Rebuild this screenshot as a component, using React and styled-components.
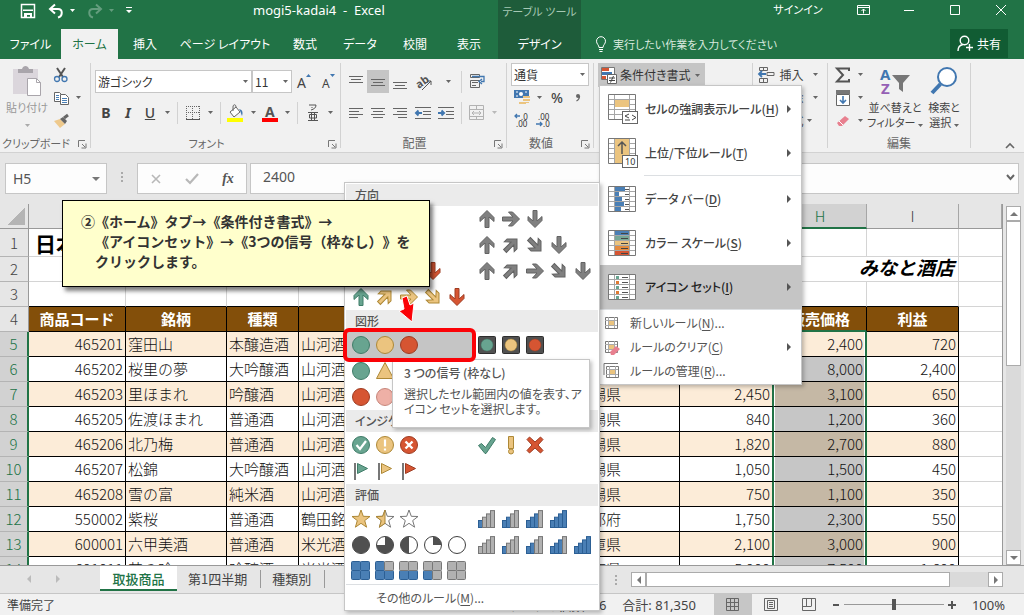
import React from 'react';
import styled, { createGlobalStyle, css } from 'styled-components';

const GlobalStyle = createGlobalStyle`
  * { box-sizing: border-box; }
  body { margin: 0; font-family: "Noto Sans", "Noto Sans CJK JP", sans-serif; font-size: 12px; line-height: 16px; color: #444; font-feature-settings: "palt"; }
  button, input, select { font: inherit; font-feature-settings: inherit; color: inherit; margin: 0; padding: 0; border: 0; background: none; border-radius: 0; }
  button { white-space: nowrap; cursor: default; }
`;

const GREEN = '#217346';
const jp = css`font-family: "Noto Sans CJK JP", sans-serif;`;

/* ---------- frame ---------- */
const Window = styled.div`position: relative; height: 100vh; display: flex; flex-direction: column; overflow: hidden; background: #e6e6e6;`;
const Spacer = styled.span`flex: 1;`;
const Header = styled.header`flex: none; background: ${GREEN}; color: #fff;`;
const TitleBar = styled.div`display: flex; height: 29px;`;
const QuickAccess = styled.div`display: flex; align-items: center; width: 186px; padding: 0 0 8px 20px; gap: 12px;`;
const DocTitle = styled.h1`margin: 0; width: 312px; padding: 2px 0 0 67px; font-size: 13px; line-height: 16px; font-weight: 400; white-space: nowrap;`;
const ContextTitle = styled.div`width: 83px; background: #1e5c3a; color: #a6c8b4; text-align: center; font-size: 11px; line-height: 24px; white-space: nowrap;`;
const WindowControls = styled.div`flex: 1; display: flex; justify-content: flex-end;`;
const SignIn = styled.button`width: 52px; height: 20px; margin-right: 16px; font-size: 11px;`;
const Control = styled.button`width: ${p => p.$w || 46}px; height: 20px; display: flex; align-items: center; justify-content: center;`;
const IconButton = styled.button`display: flex; align-items: center; gap: 6px; opacity: ${p => (p.$dim ? 0.3 : 1)};`;

const TabRow = styled.nav`display: flex; height: 30px;`;
const Tab = styled.button`
  ${jp} width: ${p => p.$w}px; text-align: center; line-height: 28px;
  ${p => p.$active && css`background: #f1f1f1; color: ${GREEN};`}
  ${p => p.$context && css`background: #1e5c3a; margin-left: 2px;`}
`;
const TellMe = styled.button`${jp} display: flex; align-items: center; gap: 6px; margin-left: 14px; color: #d9e9df; flex: 1; font-size: 11px;`;
const Share = styled.button`${jp} display: flex; align-items: center; justify-content: center; gap: 4px; width: 58px; height: 29px; margin-right: 16px; background: #115c33;`;

/* ---------- ribbon ---------- */
const Ribbon = styled.section`${jp} flex: none; height: 94px; display: flex; padding: 4px 0; background: #f1f1f1; border-bottom: 1px solid #d2d2d2;`;
const Group = styled.div`width: ${p => p.$w}px; flex: none; display: flex; flex-direction: column; border-right: 1px solid #d2d2d2;`;
const GroupBody = styled.div`flex: 1; min-height: 0; display: flex; padding: ${p => p.$pad || '0'}; gap: ${p => p.$gap || 0}px;`;
const GroupFoot = styled.div`
  position: relative; flex: none; height: 13px; line-height: 16px; text-align: center; color: #666; white-space: nowrap;
  font-size: ${p => (p.$small ? 11 : 12)}px; padding-right: ${p => (p.$launch ? 18 : 0)}px;
`;
const Launcher = styled.button`position: absolute; right: 3px; top: 5px; width: 9px; height: 9px; display: flex;`;
const Rows = styled.div`display: flex; flex-direction: column; gap: ${p => p.$gap || 0}px;`;
const Row = styled.div`display: flex; align-items: center; height: 23px;`;
const Tool = styled.button`
  width: ${p => p.$w || 22}px; height: 23px; flex: none; display: flex; align-items: center; justify-content: center; gap: 4px;
  font-size: 12px; color: #444; opacity: ${p => (p.$off ? 0.4 : 1)};
  ${p => p.$on && css`background: #c5c5c5;`}
`;
const Letter = styled.span`font: 14px/20px "Noto Sans", sans-serif; font-weight: ${p => p.$weight || 700}; font-style: ${p => p.$style || 'normal'}; text-decoration: ${p => p.$line || 'none'};`;
const Divider = styled.span`width: 1px; height: 22px; margin: 0 ${p => p.$r || 4}px 0 4px; background: #d2d2d2;`;
const BigTool = styled.button`${jp} width: ${p => p.$w}px; height: 72px; display: flex; flex-direction: column; align-items: center; font-size: 11px; line-height: 15px; color: ${p => (p.$off ? '#999' : '#444')};`;
const BigIcon = styled.span`height: 37px; flex: none; display: flex; align-items: flex-start; justify-content: center;`;
const SelectBox = styled.label`display: flex; align-items: center; width: ${p => p.$w}px; height: 23px; background: #fff; border: 1px solid #c6c6c6; padding-right: 3px;`;
const Select = styled.select`appearance: none; flex: 1; min-width: 0; height: 20px; padding-left: 2px; outline: none; font-size: 12px; color: #333;`;
const CondButton = styled.button`width: 107px; height: 24px; margin: 0 0 0 4px; display: flex; align-items: center; gap: 2px; padding-left: 3px; background: #c5c5c5; font-size: 12px; color: #333;`;
const Collapse = styled.button`margin: auto 9px 0 auto; height: 12px;`;

/* ---------- formula bar ---------- */
const FormulaBar = styled.div`flex: none; display: flex; padding: 10px 5px 10px; height: 51px; font-size: 14px;`;
const NameBox = styled.div`display: flex; align-items: center; width: 102px; height: 31px; padding: 0 6px 0 7px; background: #fdfdfd; border: 1px solid #c6c6c6;`;
const NameInput = styled.input`flex: 1; min-width: 0; outline: none; color: #555;`;
const Dots = styled.span`width: 30px; display: flex; align-items: center; justify-content: center; height: 28px;`;
const FxBox = styled.div`display: flex; width: 110px; height: 31px; background: #fdfdfd; border: 1px solid #c6c6c6;`;
const FxButton = styled.button`flex: 1; display: flex; align-items: center; justify-content: center; font-family: "Liberation Serif", serif; font-style: italic; font-weight: 700; color: #555;`;
const FormulaInputBox = styled.div`flex: 1; display: flex; align-items: center; margin-left: 3px; height: 31px; padding: 0 3px 3px 12px; background: #fdfdfd; border: 1px solid #c6c6c6;`;

/* ---------- sheet ---------- */
const SheetArea = styled.main`flex: 1; min-height: 0; display: flex;`;
const SheetView = styled.div`flex: 1; min-width: 0; overflow: hidden; background: #fff; border-right: 1px solid #999;`;
const Sheet = styled.table`
  ${jp} width: 100%; table-layout: fixed; border-collapse: separate; border-spacing: 0; font-size: 15px; font-feature-settings: normal; line-height: 22px; color: #222;
  th, td { padding: 0; overflow: hidden; white-space: nowrap; }
`;
const Col = styled.col`width: ${p => (p.$w ? p.$w + 'px' : 'auto')};`;
const Tr = styled.tr`height: ${p => p.$h || 25}px;`;
const ColHead = styled.th`
  font-weight: 300; color: ${p => (p.$sel ? GREEN : '#444')}; background: ${p => (p.$sel ? '#d2d2d2' : '#e6e6e6')};
  border-right: 1px solid #a6a6a6; border-bottom: ${p => (p.$sel ? `2px solid ${GREEN}` : '1px solid #999')};
`;
const Corner = styled.th`background: linear-gradient(135deg, transparent 50%, #b4b4b4 50%) 8px 4px / 17px 17px no-repeat #e6e6e6; border-right: 1px solid #999; border-bottom: 1px solid #999;`;
const RowHead = styled.th`
  font-weight: 300; text-align: center; color: ${p => (p.$sel ? GREEN : '#444')}; background: ${p => (p.$sel ? '#d2d2d2' : '#e6e6e6')};
  border-bottom: 1px solid #b4b4b4; border-right: ${p => (p.$sel ? `2px solid ${GREEN}` : '1px solid #999')};
`;
const Blank = styled.td`border-bottom: 1px solid ${p => (p.$dark ? '#000' : '#d4d4d4')}; border-right: ${p => (p.$last ? 0 : 1)}px solid #d4d4d4;`;
const SheetTitle = styled(Blank)`font-size: 21px; font-weight: 700; color: #000; && { padding-left: 6px; }`;
const ShopName = styled(Blank)`
  && { padding-right: 4px; font: italic 700 19px/22px "Liberation Serif", "Noto Sans CJK JP", serif; }
  text-align: right; color: #000;
`;
const Heading = styled.th`
  color: #fff; background: #834f0a; font-weight: 700; border-right: 1px solid #000; border-bottom: 1px solid #000;
  ${p => p.$sel && css`border-bottom: 2px solid ${GREEN};`}
`;
const Cell = styled.td`
  && { padding: 0 2px; } font-weight: 300; color: #111; text-align: ${p => (p.$num ? 'right' : 'left')};
  background: ${p => (p.$alt ? '#fcecd8' : '#fff')};
  border-right: 1px solid #000; border-bottom: 1px solid #000;
  ${p => p.$edge && css`border-right: 2px solid ${GREEN};`}
  ${p => p.$sel && css`
    background: ${p.$active ? '#fcecd8' : p.$alt ? '#c5b8a5' : '#c6c6c6'};
    border-right: 2px solid ${GREEN};
    box-shadow: inset 1px 0 #fff, inset -1px 0 #fff;
  `}
`;
const VScroll = styled.div`flex: none; width: 21px; display: flex; flex-direction: column; padding: 2px 2px 0 3px;`;
const ScrollButton = styled.button`width: 15px; height: 15px; flex: none; display: flex; align-items: center; justify-content: center; background: #fff; border: 1px solid #ababab;`;
const Track = styled.div`flex: 1; display: flex; flex-direction: ${p => (p.$v ? 'column' : 'row')}; width: ${p => (p.$v ? '15px' : 'auto')}; background: #dadada;`;
const Thumb = styled.div`flex: none; ${p => (p.$v ? 'height: 44%' : 'width: 89%')}; background: #fff; border: 1px solid #ababab;`;

const SheetTabs = styled.div`${jp} flex: none; display: flex; height: 28px; border-top: 1px solid #999; font-size: 13px; font-feature-settings: normal;`;
const TabArrows = styled.div`width: 100px; display: flex; align-items: center; gap: 21px; padding: 0 0 2px 25px;`;
const SheetTab = styled.button`
  height: 18px; margin-top: 4px; padding: 0 13px 0 11px; border-right: 1px solid #999; line-height: 18px;
  ${p => p.$active && css`width: 77px; height: 25px; margin-top: 0; padding: 0; line-height: 25px; border: 0; border-bottom: 2px solid ${GREEN}; background: #fff; color: ${GREEN}; font-weight: 500;`}
`;
const HScroll = styled.div`display: flex; align-items: center; width: 372px; height: 15px; margin: 6px 21px 0 0; > * { height: 15px; }`;
const StatusBar = styled.footer`flex: none; display: flex; align-items: center; height: 22px; background: #f1f1f1; border-top: 1px solid #c6c6c6;`;
const Status = styled.span`font-size: ${p => (p.$jp ? 12 : 13)}px; ${p => p.$jp && jp} margin-left: ${p => p.$ml || 0}px; margin-right: ${p => p.$mr || 0}px; white-space: nowrap;`;
const ViewButton = styled.button`width: 38px; height: 21px; display: flex; align-items: center; justify-content: center; ${p => p.$on && css`background: #c6c6c6;`}`;
const ZoomButton = styled.button`width: 10px; height: 16px; margin: 0 3px; display: flex; align-items: center; justify-content: center;`;
const ZoomRange = styled.input`
  appearance: none; width: 100px; height: 12px;
  background: linear-gradient(#999, #999) center / 100% 1px no-repeat;
  &::-webkit-slider-thumb { appearance: none; width: 4px; height: 11px; background: #555; }
`;

/* ---------- popups ---------- */
const Popup = styled.div`${jp} position: absolute; background: #fff; border: 1px solid #c6c6c6; box-shadow: 2px 2px 4px rgba(0, 0, 0, 0.25);`;
const Menu = styled(Popup)`left: 599px; top: 85px; width: 203px; padding: 1px 0;`;
const MenuItem = styled.button`
  display: flex; align-items: center; width: 100%; height: ${p => (p.$big ? 44 : 24)}px; padding: 0 8px 0 ${p => (p.$big ? 8 : 4)}px; text-align: left;
  font-size: 12px; font-weight: ${p => (p.$big ? 500 : 400)}; color: ${p => (p.$on ? '#222' : p.$big ? '#444' : '#555')}; background: ${p => (p.$on ? '#c5c5c5' : 'none')};
`;
const MenuText = styled.span`flex: 1; margin-left: ${p => (p.$big ? 7 : 9)}px;`;
const Key = styled.u`text-underline-offset: 2px;`;
const MenuLine = styled.div`height: 1px; margin-bottom: 1px; margin-left: ${p => p.$ml || 0}px; background: #dcdfe2;`;
const Gallery = styled(Popup)`left: 344px; top: 182px; width: 256px; padding: 1px 1px 0;`;
const Band = styled.h2`margin: 0; height: 22px; padding-left: 9px; font-size: 12px; font-weight: 500; line-height: 22px; color: #555; background: #ebebeb;`;
const GalleryGrid = styled.div`display: grid; grid-template-columns: 126px 126px; grid-auto-rows: 26px;`;
const GalleryItem = styled.button`display: flex; align-items: center; padding-left: 3px; ${p => p.$on && css`background: #c5c5c5;`} svg { width: 24px; height: 24px; flex: none; }`;
const GalleryMore = styled.button`display: block; width: 100%; height: 26px; padding-left: 30px; text-align: left; color: #555; border-top: 1px solid #dcdfe2;`;
const Tooltip = styled(Popup)`left: 392px; top: 359px; width: 198px; height: 69px; padding: 5px 11px; color: #555; line-height: 15px; white-space: nowrap;`;
const TooltipTitle = styled.strong`display: block; margin-bottom: 5px; line-height: 16px; font-weight: 500;`;
const Callout = styled.p`
  ${jp} position: absolute; left: 62px; top: 200px; width: 368px; height: 87px; margin: 0; padding: 10px 0 0 18px;
  background: #ffffcc; border: 1px solid #000; box-shadow: 3px 4px 4px rgba(0, 0, 0, 0.5);
  font-size: 14px; line-height: 20px; font-weight: 700; color: #333; font-feature-settings: normal; text-spacing-trim: space-all; white-space: nowrap;
`;
const Indent = styled.span`display: block; padding-left: 14px;`;
const Highlight = styled.div`position: absolute; left: 343px; top: 328px; width: 133px; height: 34px; border: 4px solid #fb0207; border-radius: 6px;`;
const Pointer = styled.svg`position: absolute; left: 392px; top: 290px;`;

/* ---------- drawings ---------- */
const Svg = ({ w = 16, h = w, children, ...rest }) => <svg width={w} height={h} viewBox={`0 0 ${w} ${h}`} fill="none" overflow="visible" aria-hidden="true" {...rest}>{children}</svg>;
const Caret = ({ c = '#666' }) => <Svg w={5} h={3}><path d="M0 0h5L2.5 3z" fill={c} /></Svg>;
const Drop = ({ w = 12, off }) => <Tool $w={w} $off={off} aria-label="その他"><Caret /></Tool>;
const Tri = ({ dir, c = '#777' }) => {
  const d = { up: 'M0 6l4-4 4 4z', down: 'M0 2h8L4 6z', left: 'M6 0v8L2 4z', right: 'M2 0v8l4-4z' }[dir];
  return <Svg w={8}><path d={d} fill={c} /></Svg>;
};
const LaunchIcon = () => <Launcher aria-label="詳細"><Svg w={9}><path d="M.5 7V.5H7M4 4l3 3M8 3.5V8H3.5" stroke="#777" /></Svg></Launcher>;
const Foot = ({ children, launch = true, small }) => <GroupFoot $launch={launch} $small={small}>{children}{launch && <LaunchIcon />}</GroupFoot>;

const lineSets = {
  top: [[1, 4, 14], [3, 7, 10], [1, 10, 14]],
  left: [[1, 3, 14], [1, 6, 10], [1, 9, 14], [1, 12, 9]],
  center: [[1, 3, 14], [3, 6, 10], [1, 9, 14], [3, 12, 10]],
  right: [[1, 3, 14], [5, 6, 10], [1, 9, 14], [6, 12, 9]],
};
const Lines = ({ set, dy = 0 }) => <Svg>{lineSets[set].map(([x, y, w]) => <rect key={y} x={x} y={y + dy} width={w} height="1" fill="#666" />)}</Svg>;
const IndentIcon = ({ dir }) => (
  <Svg w={18} h={16}>
    <path d="M1 2.5h16M9 6.5h8M9 9.5h8M1 13.5h16" stroke="#666" />
    <path d={dir === 'out' ? 'M8 8H2M4.500 5.500L2 8l2.500 2.500' : 'M1 8h6M4.500 5.500L7 8l-2.500 2.500'} stroke="#4177b0" strokeWidth="2" />
  </Svg>
);

const pal = { g: ['#68a490', '#3f7c68'], y: ['#ebc47f', '#ad8836'], r: ['#d65532', '#9e3c22'], k: ['#808080', '#636363'], p: ['#eeb0a6', '#c7867b'] };
const angle = { u: 0, ur: 45, r: 90, dr: 135, d: 180 };
const I = ({ children }) => <Svg w={24}>{children}</Svg>;
const Arrow = ({ d, c }) => <I><path transform={`rotate(${angle[d]} 12 12)`} d="M12 3.500l7 7v4l-5-4.500v10.500h-4V10l-5 4.500v-4z" fill={pal[c][0]} stroke={pal[c][1]} /></I>;
const Dot = ({ c, children }) => <I><circle cx="12" cy="12" r="8.500" fill={pal[c][0]} stroke={pal[c][1]} />{children}</I>;
const Light = ({ c }) => <I><rect x="3.500" y="3.500" width="17" height="17" rx="1" fill="#505050" stroke="#2e2e2e" /><circle cx="12" cy="12" r="6" fill={pal[c][0]} stroke={pal[c][1]} strokeWidth=".5" /></I>;
const TriUp = ({ c }) => <I><path d="M12 3.500L20.500 19.500h-17z" fill={pal[c][0]} stroke={pal[c][1]} /></I>;
const TriDown = ({ c }) => <I><path d="M3.500 7.500h17L12 17z" fill={pal[c][0]} stroke={pal[c][1]} /></I>;
const Dash = ({ c }) => <I><path d="M3.500 9.500h17v5h-17z" fill={pal[c][0]} stroke={pal[c][1]} /></I>;
const Diamond = ({ c }) => <I><path d="M12 3l9 9-9 9-9-9z" fill={pal[c][0]} stroke={pal[c][1]} /></I>;
const Flag = ({ c }) => <I><path d="M6 4v17" stroke="#777" strokeWidth="2" /><path d="M8.500 4.500l10 5-10 5z" fill={pal[c][0]} stroke={pal[c][1]} /></I>;
const starPath = 'M12 3l2.300 6.300 6.700.2-5.300 4.100 1.900 6.600L12 16.300l-5.600 3.900 1.900-6.600L3 9.500l6.700-.2z';
const halfStar = 'M12 3v13.300l-5.600 3.900 1.900-6.600L3 9.500l6.700-.2z';
const Star = ({ f }) => (
  <I>
    <path d={starPath} fill={f === 1 ? '#ebc47f' : '#fff'} stroke={f === 1 ? '#ad8836' : '#777'} />
    {f === 0.5 && <path d={halfStar} fill="#ebc47f" stroke="#ad8836" />}
  </I>
);
const pies = { 4: 'M12 3.500a8.500 8.500 0 1 1-.01 0z', 3: 'M12 12V3.500a8.500 8.500 0 1 1-8.500 8.500z', 2: 'M12 3.500a8.500 8.500 0 0 0 0 17z', 1: 'M12 12V3.500a8.500 8.500 0 0 1 8.500 8.500z' };
const Pie = ({ n }) => <I><circle cx="12" cy="12" r="8.500" fill="#fff" stroke="#404040" />{n > 0 && <path d={pies[n]} fill="#505050" />}</I>;
const Bars = ({ n }) => <I>{[0, 1, 2, 3].map(i => <rect key={i} x={3.5 + i * 4} y={13.5 - i * 3.3} width="4" height={7 + i * 3.3} fill={i < n ? '#4a7fb5' : '#b1b1b1'} stroke={i < n ? '#2c5f94' : '#777'} />)}</I>;
const boxes = [[3, 12], [12, 12], [3, 3], [12, 3]];
const fillOrder = [[], [0], [0, 1], [0, 1, 2], [0, 1, 2, 3]];
const Boxes = ({ n }) => <I>{boxes.map(([x, y], i) => { const on = fillOrder[n].includes(i); return <rect key={i} x={x - 0.5} y={y - 0.5} width="9" height="9" rx="1" fill={on ? '#4a7fb5' : '#b1b1b1'} stroke={on ? '#2c5f94' : '#777'} />; })}</I>;
const Check = ({ c, thin }) => thin ? <path d="M7.500 12l3.500 4 6-8" stroke="#fff" strokeWidth="2.200" /> : <I><path d="M3.500 12.500l3-2 4 4 7-10 3 2-9.500 14h-1z" fill={pal[c][0]} stroke={pal[c][1]} /></I>;
const Bang = () => <I><path d="M9.500 3.500h5v12h-5z" fill="#ebc47f" stroke="#ad8836" /><circle cx="12" cy="18.500" r="2.500" fill="#ebc47f" stroke="#ad8836" /></I>;
const Cross = () => <I><path d="M4 6.500L6.500 4l5.500 5 5.500-5L20 6.500 15 12l5 5.500-2.500 2.500-5.500-5-5.500 5L4 17.500 9 12z" fill="#d65532" stroke="#9e3c22" /></I>;

const galleryGroups = [
  ['方向', [
    [<Arrow d="u" c="g" />, <Arrow d="r" c="y" />, <Arrow d="d" c="r" />], ['u', 'r', 'd'].map(d => <Arrow d={d} c="k" />),
    [<TriUp c="g" />, <Dash c="y" />, <TriDown c="r" />], ['u', 'ur', 'dr', 'd'].map(d => <Arrow d={d} c="k" />),
    [<Arrow d="u" c="g" />, <Arrow d="ur" c="y" />, <Arrow d="dr" c="y" />, <Arrow d="d" c="r" />], ['u', 'ur', 'r', 'dr', 'd'].map(d => <Arrow d={d} c="k" />),
    [<Arrow d="u" c="g" />, <Arrow d="ur" c="y" />, <Arrow d="r" c="y" />, <Arrow d="dr" c="y" />, <Arrow d="d" c="r" />],
  ]],
  ['図形', [
    ['g', 'y', 'r'].map(c => <Dot c={c} />), ['g', 'y', 'r'].map(c => <Light c={c} />),
    [<Dot c="g" />, <TriUp c="y" />, <Diamond c="r" />], [],
    [<Dot c="r" />, <Dot c="p" />],
  ]],
  ['インジケーター', [
    [<Dot c="g"><Check thin /></Dot>, <Dot c="y"><path d="M12 6.500v7M12 15.500v2" stroke="#fff" strokeWidth="2.200" /></Dot>, <Dot c="r"><path d="M8.500 8.500l7 7M15.500 8.500l-7 7" stroke="#fff" strokeWidth="2.400" /></Dot>],
    [<Check c="g" />, <Bang />, <Cross />],
    ['g', 'y', 'r'].map(c => <Flag c={c} />),
  ]],
  ['評価', [
    [1, 0.5, 0].map(f => <Star f={f} />), [1, 2, 3, 4].map(n => <Bars n={n} />),
    [4, 3, 2, 1, 0].map(n => <Pie n={n} />), [0, 1, 2, 3, 4].map(n => <Bars n={n} />),
    [<Boxes n={4} />, <Boxes n={3} />, <Boxes n={2} />, <Boxes n={1} />, <Boxes n={0} />],
  ]],
];

const MenuGrid = ({ h = 26, children }) => (
  <Svg w={30} h={h}>
    <path d="M.5.5h27v25H.5z" fill="#fff" stroke="#777" />
    <path d="M6.500 1v24M21.500 1v24M1 5.500h26M1 10.500h26M1 15.500h26M1 20.500h26" stroke="#a6a6a6" />
    {children}
  </Svg>
);
const Badge = () => <rect x="14.500" y="17.500" width="15" height="12" fill="#fff" stroke="#666" />;
const bigIcons = {
  cells: <MenuGrid h={30}><path d="M7 6h14v7H7z" fill="#ebc47f" /><Badge /><path d="M21 20l-4 2 4 2M17 26h5M24 21l4 2.500-4 2.500" stroke="#444" /></MenuGrid>,
  top: <MenuGrid h={30}><path d="M7 1h14v24H7z" fill="#ebc47f" /><path d="M14 16V4M10 8l4-4 4 4" stroke="#555" strokeWidth="1.500" /><Badge /><text x="17" y="27" fontSize="9" fontFamily="Noto Sans" fontWeight="400" fill="#333">10</text></MenuGrid>,
  bars: <MenuGrid>{[9, 3, 6, 8, 5].map((w, i) => <path key={i} d={`M7 ${1 + i * 5}h${w + 1}v4H7z`} fill="#4a7fb5" />)}<path d="M17 3.500h4M17 8.500h4M17 13.500h4M17 18.500h4M17 23.500h4" stroke="#555" /></MenuGrid>,
  scale: <MenuGrid>{['#4a7fb5', '#76a797', '#ebc47f', '#e58b3e', '#d65532'].map((c, i) => <path key={c} d={`M7 ${1 + i * 5}h14v4H7z`} fill={c} />)}<path d="M13 3.500h7M13 8.500h7M13 13.500h7M13 18.500h7M13 23.500h7" stroke="#444" /></MenuGrid>,
  icons: <MenuGrid>{['#68a490', '#e07b33', '#68a490', '#e07b33', '#68a490'].map((c, i) => <rect key={i} x="8" y={2 + i * 5} width="3" height="3" fill={c} />)}<path d="M14 3.500h6M14 8.500h6M14 13.500h6M14 18.500h6M14 23.500h6" stroke="#555" /></MenuGrid>,
};
const SmallGrid = ({ kind }) => (
  <Svg w={17} h={16}>
    {kind === 'manage' && <path d="M0 12V.5H14" stroke="#777" />}
    <g transform={kind === 'manage' ? 'translate(0 1)' : 'translate(-1 0)'}>
      <path d="M2.500 2.500h12v11h-12z" fill="#fff" stroke="#777" />
      <path d="M5.500 2v11M11.500 2v11M2 5.500h12M2 10.500h12" stroke="#aaa" />
      <path d="M6 6h5v4H6z" fill="#ebc47f" />
    </g>
    {kind === 'clear' && <path d="M6 13l6-6 4 3-6 6H7z" fill="#e8808f" />}
  </Svg>
);

const SaveIcon = () => <Svg w={16}><path d="M1.500 1.500h13v13h-13z" stroke="#fff" strokeWidth="1.500" /><path d="M3 6.500h10v1.500H3zM4 10h8v5h-2v-3H7v3H4z" fill="#fff" /></Svg>;
const UndoIcon = ({ flip }) => <Svg w={16}><g transform={flip ? 'matrix(-1 0 0 1 16 0)' : ''}><path d="M2 6h8c5 0 5 7 0 8.500M7 1.500L2 6l5 4.500" stroke="#fff" strokeWidth="2" /></g></Svg>;

/* ---------- data ---------- */
const tabs = [['ファイル', 61], ['ホーム', 57, true], ['挿入', 54], ['ページ レイアウト', 106], ['数式', 54], ['データ', 56], ['校閲', 54], ['表示', 54]];
const products = [
  ['465201', '窪田山', '本醸造酒', '山河酒造', '新潟県', '1,680', '2,400', '720'],
  ['465202', '桜里の夢', '大吟醸酒', '山河酒造', '新潟県', '5,600', '8,000', '2,400'],
  ['465203', '里ほまれ', '吟醸酒', '山河酒造', '新潟県', '2,450', '3,100', '650'],
  ['465205', '佐渡ほまれ', '普通酒', '山河酒造', '新潟県', '840', '1,200', '360'],
  ['465206', '北乃梅', '普通酒', '山河酒造', '新潟県', '1,820', '2,700', '880'],
  ['465207', '松錦', '大吟醸酒', '山河酒造', '新潟県', '1,050', '1,500', '450'],
  ['465208', '雪の富', '純米酒', '山河酒造', '新潟県', '750', '1,100', '350'],
  ['550002', '紫桜', '普通酒', '鶴田銘醸', '京都府', '1,750', '2,300', '550'],
  ['600001', '六甲美酒', '普通酒', '米光酒造', '兵庫県', '2,100', '3,000', '900'],
  ['601011', '英の吟', '吟醸酒', '米光酒造', '兵庫県', '5,900', '7,500', '1,600'],
];
const letters = ['A', 'B', 'C', 'D', 'E', 'F', 'G', 'H', 'I'];
const headings = ['商品コード', '銘柄', '種類', '製造元', '', '産地', '仕入価格', '販売価格', '利益'];
const widths = [29, 97, 101, 72, 150, 125, 106, 94, 93, 92];
const menuBig = [
  ['cells', 'セルの強調表示ルール', 'H'], ['top', '上位/下位ルール', 'T'], null,
  ['bars', 'データ バー', 'D'], ['scale', 'カラー スケール', 'S'], ['icons', 'アイコン セット', 'I'],
];
const menuSmall = [['new', '新しいルール', 'N', '...'], ['clear', 'ルールのクリア', 'C', ''], ['manage', 'ルールの管理', 'R', '...']];

/* ---------- parts ---------- */
const AppHeader = () => (
  <Header>
    <TitleBar>
      <QuickAccess>
        <IconButton aria-label="保存"><SaveIcon /></IconButton>
        <IconButton aria-label="元に戻す"><UndoIcon /><Caret c="#fff" /></IconButton>
        <IconButton aria-label="やり直し" $dim><UndoIcon flip /><Caret c="#fff" /></IconButton>
        <IconButton aria-label="カスタマイズ"><Svg w={6} h={7}><path d="M0 0h6v1H0zM0 3h6L3 6z" fill="#fff" /></Svg></IconButton>
      </QuickAccess>
      <DocTitle>mogi5-kadai4&nbsp; -&nbsp; Excel</DocTitle>
      <ContextTitle>テーブル ツール</ContextTitle>
      <WindowControls>
        <SignIn>サインイン</SignIn>
        <Control aria-label="リボンの表示オプション"><Svg w={13} h={10}><path d="M.5.5h12v9H.5zM1 2.500h11M6.500 8.500V4M4.500 6l2-2 2 2" stroke="#fff" /></Svg></Control>
        <Control aria-label="最小化"><Svg w={10}><path d="M0 5.500h10" stroke="#fff" /></Svg></Control>
        <Control aria-label="最大化"><Svg w={10}><path d="M.5.5h9v9h-9z" stroke="#fff" /></Svg></Control>
        <Control aria-label="閉じる"><Svg w={10}><path d="M0 0l10 10M10 0L0 10" stroke="#fff" /></Svg></Control>
      </WindowControls>
    </TitleBar>
    <TabRow>
      {tabs.map(([t, w, a]) => <Tab key={t} $w={w} $active={a}>{t}</Tab>)}
      <Tab $w={83} $context>デザイン</Tab>
      <TellMe>
        <Svg w={12} h={16}><path d="M4 11.500C4 9 1.500 8 1.500 5.200a4.500 4.500 0 0 1 9 0C10.500 8 8 9 8 11.500zM4 13.500h4M4.500 15.500h3" stroke="#fff" /></Svg>
        実行したい作業を入力してください
      </TellMe>
      <Share>
        <Svg w={16} h={17}><circle cx="7.500" cy="5.500" r="4.300" stroke="#fff" strokeWidth="1.400" /><path d="M1 16c0-4 2-6 5-6.500M12.500 9v7M9 12.500h7" stroke="#fff" strokeWidth="1.400" /></Svg>
        共有
      </Share>
    </TabRow>
  </Header>
);

const AppRibbon = () => (
  <Ribbon>
    <Group $w={91}>
      <GroupBody $pad="0 0 0 4px">
        <BigTool $w={46} $off>
          <BigIcon><Svg w={30} h={34}><path d="M1 6h25v25H1z" fill="#dbd6dc" /><path d="M6 10V6h4c1-4 6-4 7 0h4v4z" fill="#a9a5ab" /><path d="M15.500 15.500h9l4 4v13h-13z" fill="#fff" stroke="#a9a5ab" /><path d="M24.500 15.500v4h4" stroke="#a9a5ab" /></Svg></BigIcon>
          <span>貼り付け</span>
          <span><Caret c="#aaa" /></span>
        </BigTool>
        <Rows>
          <Row><Tool aria-label="切り取り"><Svg><path d="M4 1l6 9M12 1L6 10" stroke="#555" strokeWidth="2" /><circle cx="4" cy="12" r="2.500" stroke="#4177b0" strokeWidth="1.300" /><circle cx="11.500" cy="12" r="2.500" stroke="#4177b0" strokeWidth="1.300" /></Svg></Tool></Row>
          <Row><Tool aria-label="コピー"><Svg><path d="M1.500 2.500h5l2 2v7h-7z" fill="#fff" stroke="#666" /><path d="M7.500 4.500h5l3 3v7h-8z" fill="#fff" stroke="#666" /><path d="M3 5.500h3M3 7.500h3M3 9.500h3M9 8.500h5M9 10.500h5M9 12.500h5" stroke="#4a7fb5" /></Svg></Tool><Drop /></Row>
          <Row><Tool aria-label="書式のコピー"><Svg><path d="M1 8l6-2 5 5-5 4z" fill="#eec98c" /><path d="M7 6l3-2 4 4-2 3z" fill="#666" /><path d="M11 5l4-3" stroke="#666" strokeWidth="3" /></Svg></Tool></Row>
        </Rows>
      </GroupBody>
      <Foot small>クリップボード</Foot>
    </Group>

    <Group $w={250}>
      <GroupBody $pad="7px 0 0 4px">
        <Rows $gap={8}>
          <Row>
            <SelectBox $w={157}><Select aria-label="フォント" defaultValue="游ゴシック"><option>游ゴシック</option></Select><Caret /></SelectBox>
            <SelectBox $w={40}><Select aria-label="フォント サイズ" defaultValue="11"><option>11</option></Select><Caret /></SelectBox>
            <Tool $w={24} aria-label="拡大"><Svg w={16} h={20}><text x="1" y="16" fontSize="14" fontFamily="Noto Sans" fill="#444">A</text><path d="M10 5h5l-2.500-3z" fill="#4177b0" /></Svg></Tool>
            <Tool $w={24} aria-label="縮小"><Svg w={16} h={20}><text x="2" y="16" fontSize="12" fontFamily="Noto Sans" fill="#444">A</text><path d="M10 2h5l-2.500 3z" fill="#4177b0" /></Svg></Tool>
          </Row>
          <Row>
            <Tool aria-label="太字"><Letter>B</Letter></Tool>
            <Tool aria-label="斜体"><Letter $style="italic">I</Letter></Tool>
            <Tool aria-label="下線"><Letter $weight={500} $line="underline">U</Letter></Tool>
            <Drop />
            <Divider />
            <Tool aria-label="罫線"><Svg w={14}><path d="M.5 0v13M13.500 0v13M6.500 0v13M0 .5h14M0 6.500h14" stroke="#666" strokeDasharray="1 1" /><path d="M0 13.500h14" stroke="#555" /></Svg></Tool><Drop />
            <Divider />
            <Tool aria-label="塗りつぶし"><Svg w={18}><path d="M0 14h16v4H0z" fill="#ff0" /><path d="M3 8l6-5 4 5-6 5z" fill="#fff" stroke="#666" /><path d="M6 7V3c0-3 3-3 3 0" stroke="#666" /><path d="M12 5c4 1 4 4 3 7-1-2-1-4-3-7z" fill="#4177b0" /></Svg></Tool><Drop />
            <Tool aria-label="文字色"><Svg w={16} h={18}><path d="M0 14h16v4H0z" fill="#f00" /><text x="3" y="13" fontSize="14" fontWeight="700" fontFamily="Noto Sans" fill="#555">A</text></Svg></Tool><Drop />
            <Divider />
            <Tool aria-label="ふりがな"><Svg w={12} h={18}><path d="M2 1h7c0 3-2 4-5 5M5 3v1" stroke="#555" /><path d="M1 8.500h10M1 16.500h10M4.500 8v8M7.500 8v8M2.500 10.500h7v3.500h-7z" stroke="#555" /></Svg></Tool><Drop />
          </Row>
        </Rows>
      </GroupBody>
      <Foot small>フォント</Foot>
    </Group>

    <Group $w={166}>
      <GroupBody $pad="7px 0 0 4px">
        <Rows $gap={8}>
          <Row>
            <Tool aria-label="上揃え"><Lines set="top" dy={-2} /></Tool>
            <Tool $on aria-label="上下中央揃え"><Lines set="top" dy={1} /></Tool>
            <Tool aria-label="下揃え"><Lines set="top" dy={4} /></Tool>
            <Tool $w={28} aria-label="方向"><Svg w={18} h={20}><text x="0" y="14" fontSize="11" fontWeight="700" fontFamily="Noto Sans" fill="#555" transform="rotate(-35 6 11)">ab</text><path d="M6 18l9-9M11 9h4v4" stroke="#555" /></Svg></Tool>
            <Drop w={18} />
            <Divider $r={4} />
            <Tool aria-label="折り返し"><Svg w={17}><path d="M1.500 1.500h9v3h-9zM1.500 7.500h9v7h-9zM3 9.500h6M3 12.500h4" stroke="#666" /><path d="M3 3.500h12v5h-3M13 6l-3 2.500 3 2.500" stroke="#4177b0" strokeWidth="1.300" /></Svg></Tool>
          </Row>
          <Row>
            <Tool aria-label="左揃え"><Lines set="left" /></Tool>
            <Tool aria-label="中央揃え"><Lines set="center" /></Tool>
            <Tool aria-label="右揃え"><Lines set="right" /></Tool>
            <Tool $w={24} aria-label="インデントを減らす"><IndentIcon dir="out" /></Tool>
            <Tool aria-label="インデントを増やす"><IndentIcon dir="in" /></Tool>
            <Divider />
            <Tool $off aria-label="セルを結合"><Svg w={16}><path d="M.5.5h14V14.500H.5zM0 4.500h15M0 11.500h15M7.500 0v4M7.500 12v3M3 8h9M5 6L3 8l2 2M10 6l2 2-2 2" stroke="#555" /></Svg></Tool><Drop off />
          </Row>
        </Rows>
      </GroupBody>
      <Foot>配置</Foot>
    </Group>

    <Group $w={87}>
      <GroupBody $pad="0 0 0 4px">
        <Rows>
          <Row><SelectBox $w={78}><Select aria-label="表示形式" defaultValue="通貨"><option>通貨</option></Select><Caret /></SelectBox></Row>
          <Row>
            <Tool aria-label="通貨"><Svg w={17}><path d="M0 1h15v8H0z" fill="#4177b0" /><circle cx="7" cy="5" r="2" fill="#fff" /><path d="M2 3h2M2 7h2M11 3h2" stroke="#fff" /><path d="M9 7h7v2H9zM9 10h7v2H9zM5 13h7v2H5zM9 13h6v1H9z" fill="#ebc47f" /></Svg></Tool><Drop />
            <Tool $w={24} aria-label="パーセント"><Letter $weight={500}>%</Letter></Tool>
            <Tool $w={18} aria-label="桁区切り"><Svg w={6} h={10}><circle cx="3" cy="3" r="2" fill="#666" /><path d="M4.500 3c0 3-1 4-3 5" stroke="#666" strokeWidth="1.300" /></Svg></Tool>
          </Row>
          <Row>
            <Tool aria-label="小数点以下を増やす"><Svg w={16} h={17}><path d="M6 4H1M3 2L1 4l2 2" stroke="#4177b0" strokeWidth="1.300" /><text x="7" y="8" fontSize="8" fontFamily="Noto Sans" fill="#333">.0</text><text x="2" y="15" fontSize="8" fontFamily="Noto Sans" fill="#333">.00</text></Svg></Tool>
            <Tool aria-label="小数点以下を減らす"><Svg w={16} h={17}><text x="2" y="8" fontSize="8" fontFamily="Noto Sans" fill="#333">.00</text><path d="M0 12h6M4 10l2 2-2 2" stroke="#4177b0" strokeWidth="1.300" /><text x="7" y="15" fontSize="8" fontFamily="Noto Sans" fill="#333">.0</text></Svg></Tool>
          </Row>
        </Rows>
      </GroupBody>
      <Foot>数値</Foot>
    </Group>

    <Group $w={159}>
      <GroupBody>
        <CondButton>
          <Svg w={17} h={18}><path d="M.5 1.500h13v12H.5z" fill="#fff" stroke="#777" /><path d="M1 2h7v3H1z" fill="#d65532" /><path d="M1 6h10v3H1z" fill="#4177b0" /><path d="M1 10h4v3H1z" fill="#d65532" /><path d="M6.500 8.500h9v9h-9z" fill="#fff" stroke="#666" /><path d="M8 12h6M8 14.500h6M12.500 10l-3 6.500" stroke="#444" /></Svg>
          条件付き書式&nbsp;<Caret />
        </CondButton>
      </GroupBody>
      <Foot launch={false}>スタイル</Foot>
    </Group>

    <Group $w={75}>
      <GroupBody $pad="0 0 0 4px">
        <Rows>
          {['挿入', '削除', '書式'].map(t => (
            <Row key={t}>
              <Tool $w={48}><Svg w={17} h={16}><path d="M1.500.5h8v3h-8zM5.500 0v3M1.500 11.500h8v4h-8zM5.500 11v4M9 5.500h7v3H9z" stroke="#666" /><path d="M8 7H1M4 4L1 7l3 3" stroke="#4177b0" strokeWidth="1.800" /></Svg>{t}</Tool>
              <Drop w={t === '書式' ? 8 : 20} />
            </Row>
          ))}
        </Rows>
      </GroupBody>
      <Foot launch={false}>セル</Foot>
    </Group>

    <Group $w={143}>
      <GroupBody $pad="0 0 0 4px">
        <Rows>
          <Row><Tool aria-label="合計"><Svg w={16}><path d="M14 4V1.500H2L8 8l-6 6.500h12V12" stroke="#555" strokeWidth="2" /></Svg></Tool><Drop /></Row>
          <Row><Tool aria-label="フィル"><Svg w={14} h={16}><path d="M.5 4.500h13v11H.5z" fill="#fff" stroke="#666" /><path d="M0 0h14v4H0z" fill="#777" /><path d="M7 6v7M4 10l3 3 3-3" stroke="#4177b0" strokeWidth="1.600" /></Svg></Tool><Drop /></Row>
          <Row><Tool aria-label="クリア"><Svg w={14}><path d="M1 9l8-7 4 3-7 7H3z" fill="#e8808f" /><path d="M3 7l4 4" stroke="#fff" /></Svg></Tool><Drop /></Row>
        </Rows>
        <BigTool $w={58}>
          <BigIcon><Svg w={30} h={36}><text x="0" y="17" fontSize="15" fontWeight="700" fontFamily="Noto Sans" fill="#4177b0">A</text><text x="1" y="31" fontSize="15" fontWeight="700" fontFamily="Noto Sans" fill="#9560b5">Z</text><path d="M12 12h18l-7 8v9l-4-3v-6z" fill="#777" /></Svg></BigIcon>
          <span>並べ替えと</span><span>フィルター <Caret /></span>
        </BigTool>
        <BigTool $w={40}>
          <BigIcon><Svg w={28} h={34}><circle cx="17" cy="14" r="9" fill="#fff" stroke="#4177b0" strokeWidth="2" /><path d="M10.500 21L2 30" stroke="#4177b0" strokeWidth="4" /></Svg></BigIcon>
          <span>検索と</span><span>選択 <Caret /></span>
        </BigTool>
      </GroupBody>
      <Foot launch={false}>編集</Foot>
    </Group>
    <Collapse aria-label="リボンを折りたたむ"><Svg w={10} h={7}><path d="M1 6l4-4 4 4" stroke="#666" strokeWidth="1.600" /></Svg></Collapse>
  </Ribbon>
);

const AppFormulaBar = () => (
  <FormulaBar>
    <NameBox><NameInput aria-label="名前ボックス" defaultValue="H5" /><Tri dir="down" /></NameBox>
    <Dots><Svg w={2} h={10}><path d="M0 0h2v2H0zM0 4h2v2H0zM0 8h2v2H0z" fill="#aaa" /></Svg></Dots>
    <FxBox>
      <FxButton aria-label="キャンセル"><Svg w={10}><path d="M1 1l8 8M9 1L1 9" stroke="#b8b8b8" strokeWidth="1.600" /></Svg></FxButton>
      <FxButton aria-label="入力"><Svg w={14} h={12}><path d="M1 6l4 4 8-9" stroke="#b8b8b8" strokeWidth="2.200" /></Svg></FxButton>
      <FxButton>fx</FxButton>
    </FxBox>
    <FormulaInputBox><NameInput aria-label="数式" defaultValue="2400" /><Svg w={9} h={7}><path d="M1 1l3.500 4L8 1" stroke="#666" strokeWidth="2" /></Svg></FormulaInputBox>
  </FormulaBar>
);

const Blanks = ({ from, to }) => letters.slice(from, to).map(l => <Blank key={l} />);

const AppSheet = () => (
  <SheetArea>
    <SheetView>
      <Sheet>
        <colgroup>{widths.map((w, i) => <Col key={i} $w={w} />)}<Col /></colgroup>
        <thead>
          <Tr><Corner />{letters.map(l => <ColHead key={l} $sel={l === 'H'}>{l}</ColHead>)}<ColHead /></Tr>
        </thead>
        <tbody>
          <Tr $h={28}><RowHead>1</RowHead><SheetTitle colSpan={3}>日本酒</SheetTitle><Blanks from={3} to={9} /><Blank $last /></Tr>
          <Tr><RowHead>2</RowHead><Blanks from={0} to={7} /><ShopName colSpan={2}>みなと酒店</ShopName><Blank $last /></Tr>
          <Tr><RowHead>3</RowHead>{letters.map(l => <Blank key={l} $dark />)}<Blank $last /></Tr>
          <Tr><RowHead>4</RowHead>{headings.map((h, i) => <Heading key={i} $sel={i === 7}>{h}</Heading>)}<Blank $last /></Tr>
          {products.map((p, r) => {
            const alt = r % 2 === 0;
            const cells = [...p.slice(0, 4), '', ...p.slice(4)];
            return (
              <Tr key={p[0]}>
                <RowHead $sel>{r + 5}</RowHead>
                {cells.map((c, i) => <Cell key={i} $alt={alt} $num={i === 0 || i > 5} $edge={i === 6} $sel={i === 7} $active={r === 0}>{c}</Cell>)}
                <Blank $last />
              </Tr>
            );
          })}
        </tbody>
      </Sheet>
    </SheetView>
    <VScroll>
      <ScrollButton aria-label="上へ"><Tri dir="up" /></ScrollButton>
      <Track $v><Thumb $v /></Track>
      <ScrollButton aria-label="下へ"><Tri dir="down" /></ScrollButton>
    </VScroll>
  </SheetArea>
);

const AppFooter = () => (
  <>
    <SheetTabs>
      <TabArrows><Tri dir="left" c="#bbb" /><Tri dir="right" c="#bbb" /></TabArrows>
      <SheetTab $active>取扱商品</SheetTab><SheetTab>第1四半期</SheetTab><SheetTab>種類別</SheetTab>
      <Spacer />
      <Dots><Svg w={2} h={10}><path d="M0 0h2v2H0zM0 4h2v2H0zM0 8h2v2H0z" fill="#aaa" /></Svg></Dots>
      <HScroll>
        <ScrollButton aria-label="左へ"><Tri dir="left" /></ScrollButton>
        <Track><Thumb /></Track>
        <ScrollButton aria-label="右へ"><Tri dir="right" /></ScrollButton>
      </HScroll>
    </SheetTabs>
    <StatusBar>
      <Status $jp $ml={7}>準備完了</Status>
      <Spacer />
      <Status>データの個数: 16</Status>
      <Status $ml={16} $mr={18}>合計: 81,350</Status>
      <ViewButton $on aria-label="標準"><Svg w={13}><path d="M.5.5h12v12H.5zM0 4.500h13M0 8.500h13M4.500 0v13M8.500 0v13" stroke="#666" /></Svg></ViewButton>
      <ViewButton aria-label="ページ レイアウト"><Svg w={14} h={13}><path d="M.5.5h13v12H.5zM3.500 2.500h7v8h-7zM5 4.500h4M5 6.500h4M5 8.500h4" stroke="#666" /></Svg></ViewButton>
      <ViewButton aria-label="改ページ プレビュー"><Svg w={14} h={13}><path d="M.5.5h13v12H.5zM0 8.500h9.500M4.500 0v8M9.500 0v8" stroke="#666" /></Svg></ViewButton>
      <ZoomButton aria-label="縮小"><Svg w={8}><path d="M1 4h6" stroke="#555" strokeWidth="2" /></Svg></ZoomButton>
      <ZoomRange type="range" aria-label="ズーム" min="0" max="200" defaultValue="100" />
      <ZoomButton aria-label="拡大"><Svg w={8}><path d="M0 4h8M4 0v8" stroke="#555" strokeWidth="2" /></Svg></ZoomButton>
      <Status $ml={12} $mr={19}>100%</Status>
    </StatusBar>
  </>
);

const CondMenu = () => (
  <Menu role="menu">
    {menuBig.map((m, i) => m ? (
      <MenuItem key={m[0]} role="menuitem" $big $on={m[0] === 'icons'}>
        {bigIcons[m[0]]}<MenuText $big>{m[1]}(<Key>{m[2]}</Key>)</MenuText><Tri dir="right" c="#555" />
      </MenuItem>
    ) : <MenuLine key={i} $ml={44} />)}
    <MenuLine />
    {menuSmall.map(([k, t, key, dots]) => (
      <MenuItem key={k} role="menuitem">
        <SmallGrid kind={k} /><MenuText>{t}(<Key>{key}</Key>){dots}</MenuText>{k === 'clear' && <Tri dir="right" c="#555" />}
      </MenuItem>
    ))}
  </Menu>
);

const IconGallery = () => (
  <Gallery>
    {galleryGroups.map(([name, items]) => (
      <section key={name}>
        <Band>{name}</Band>
        <GalleryGrid>
          {items.map((set, i) => (
            <GalleryItem key={i} aria-label={`${name} ${i + 1}`} $on={name === '図形' && i === 0}>
              {set.map((icon, j) => React.cloneElement(icon, { key: j }))}
            </GalleryItem>
          ))}
        </GalleryGrid>
      </section>
    ))}
    <GalleryMore>その他のルール(<Key>M</Key>)...</GalleryMore>
  </Gallery>
);

export default function App() {
  return (
    <Window>
      <GlobalStyle />
      <AppHeader />
      <AppRibbon />
      <AppFormulaBar />
      <AppSheet />
      <AppFooter />
      <CondMenu />
      <IconGallery />
      <Tooltip role="tooltip">
        <TooltipTitle>3 つの信号 (枠なし)</TooltipTitle>
        選択したセル範囲内の値を表す、ア<br />イコン セットを選択します。
      </Tooltip>
      <Callout>
        ②《ホーム》タブ→《条件付き書式》→
        <Indent>《アイコンセット》→《3つの信号（枠なし）》を</Indent>
        <Indent>クリックします。</Indent>
      </Callout>
      <Highlight />
      <Pointer width="28" height="36" viewBox="0 0 28 36" fill="#fb0207" stroke="#fff" strokeWidth="1">
        <path d="M10 8l5-2 3 9 4-2-2 19L7 21l5-2z" />
      </Pointer>
    </Window>
  );
}
